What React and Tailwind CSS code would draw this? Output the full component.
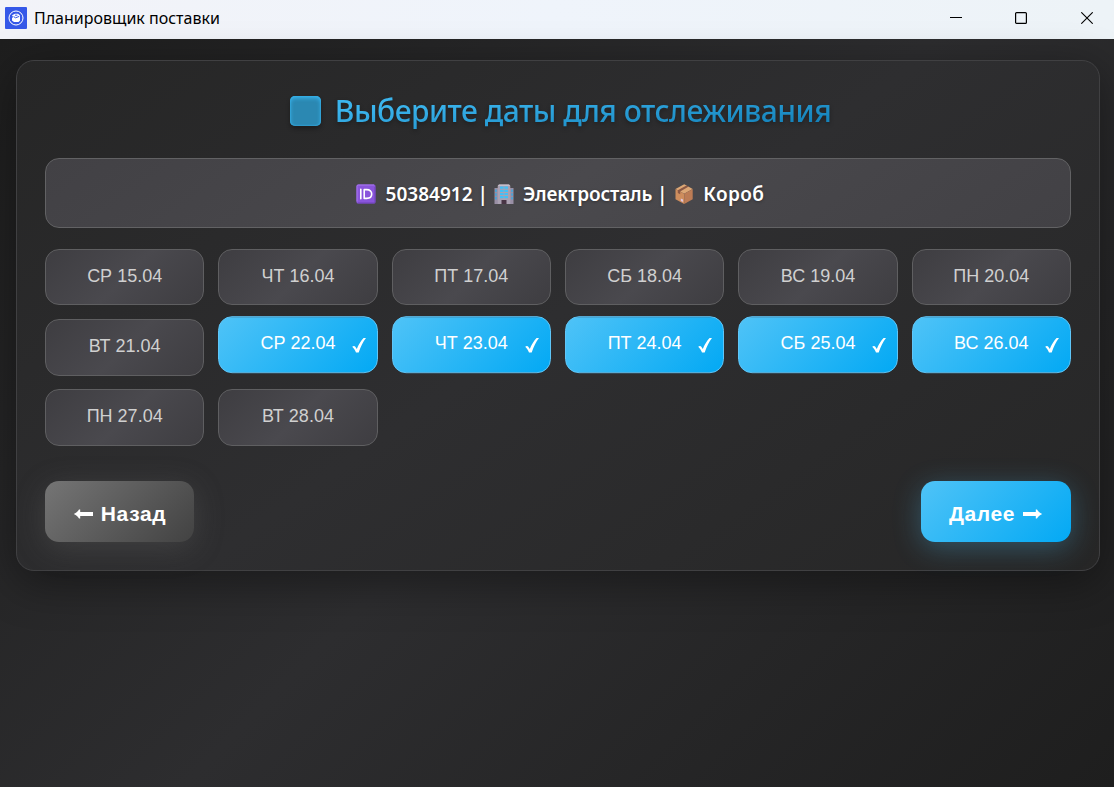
import React from 'react';

const dates = [
  { label: 'СР 15.04' },
  { label: 'ЧТ 16.04' },
  { label: 'ПТ 17.04' },
  { label: 'СБ 18.04' },
  { label: 'ВС 19.04' },
  { label: 'ПН 20.04' },
  { label: 'ВТ 21.04' },
  { label: 'СР 22.04', selected: true },
  { label: 'ЧТ 23.04', selected: true },
  { label: 'ПТ 24.04', selected: true },
  { label: 'СБ 25.04', selected: true },
  { label: 'ВС 26.04', selected: true },
  { label: 'ПН 27.04' },
  { label: 'ВТ 28.04' },
];

const AppIcon = () => (
  <svg className="w-[22px] h-[22px] shrink-0" viewBox="0 0 22 22" fill="none">
    <rect width="22" height="22" rx="1" fill="#3558e8" />
    <circle cx="11" cy="11" r="7" stroke="#fff" strokeWidth="1" />
    <path d="M7 8.2l3-1.5h3l2 1.8v5l-1.5 1.5H9l-2-1.6v-2.6l1.2-.6z" fill="#fff" />
    <path d="M8.6 9.6l2 1.2 3.6-1.4M10 8.2h2.4" stroke="#3558e8" strokeWidth="1" />
  </svg>
);

const CheckIcon = () => (
  <svg className="w-[14px] h-[16px]" viewBox="0 0 14 16" fill="#fff">
    <path d="M0.2 9.6 C1.2 8.6 2.7 8.6 3.3 9.6 L4.8 11.8 C6.6 7.2 8.8 3.5 11.6 0.7 L14 0.7 C11 4.6 8.7 9.4 6.7 15.2 L4 15.2 C3 13 1.9 11.2 0.2 9.6Z" />
  </svg>
);

const ArrowIcon = ({ className }) => (
  <svg className={className} viewBox="0 0 20 10" fill="#fff">
    <path d="M0.5 3.1h12.8V0.4h1.2c1 1.7 2.6 3.3 5.2 4.5-2.6 1.2-4.2 2.8-5.2 4.7h-1.2V6.9H0.5z" />
  </svg>
);

const IdIcon = () => (
  <svg className="w-[20px] h-[20px]" viewBox="0 0 20 20" fill="none">
    <rect x="0.5" y="0.5" width="19" height="19" rx="1.5" fill="#8a55dc" />
    <path d="M1 17.5V2.2C1 1.4 1.5 1 2.2 1H18" stroke="#a878f0" />
    <path d="M19 3v14.8c0 .8-.4 1.2-1.2 1.2H2" stroke="#6e43b8" />
    <path d="M4.8 5.3v9.4M8.2 5.6v8.8h2.5c3.1 0 5-1.7 5-4.4s-1.9-4.4-5-4.4z" stroke="#fff" strokeWidth="1.6" strokeLinecap="round" strokeLinejoin="round" />
  </svg>
);

const BuildingIcon = () => (
  <svg className="w-[20px] h-[20px]" viewBox="0 0 20 20">
    <path d="M0.5 4h4v16h-4zM15.5 4h4v16h-4z" fill="#998fa5" />
    <path d="M5 .5h10l1.3 1.5V20H3.7V2z" fill="#aaa1b2" />
    <path d="M3.7 2L5 .5h10l1.3 1.5z" fill="#c5bdca" />
    <path d="M6 2.5h3.6v2.2H6zM10.4 2.5H14v2.2h-3.6zM6 5.7h3.6v2.2H6zM10.4 5.7H14v2.2h-3.6zM6 8.9h3.6v2.2H6zM10.4 8.9H14v2.2h-3.6zM6 12.1h3.6v2.2H6zM10.4 12.1H14v2.2h-3.6z" fill="#42c0f7" />
    <path d="M1.2 5.5h1.5V8H1.2zM1.2 9.2h1.5v2.5H1.2zM1.2 13h1.5v2.5H1.2zM17.3 5.5h1.5V8h-1.5zM17.3 9.2h1.5v2.5h-1.5zM17.3 13h1.5v2.5h-1.5z" fill="#3ba9df" />
    <path d="M7.5 16h5v4h-5z" fill="#483545" />
  </svg>
);

const BoxIcon = () => (
  <svg className="w-[20px] h-[20px]" viewBox="0 0 20 20">
    <path d="M10.2.3l8.5 4.6-8.5 4.9L1.5 5z" fill="#dda775" />
    <path d="M1.5 5l8.7 4.8V20l-8.7-4.8z" fill="#ce8d5d" />
    <path d="M18.7 4.9v10.3L10.2 20V9.8z" fill="#bd7c55" />
    <path d="M6.2 7.6l8.5-5-2.3-1.2-8.6 4.9v2.6l2.4 1.4z" fill="#8a5844" />
    <path d="M6.8 14.4l2.3 1.2v2.5l-2.3-1.2z" fill="#dfc6df" />
  </svg>
);

const TitleBar = () => (
  <header className="h-[39px] bg-linear-to-r from-[#f2f3f8] via-[#eff4fb] to-[#edf3f7] flex items-center justify-between text-black">
    <div className="flex items-center pl-[5px] pb-[3px] gap-[7px]">
      <AppIcon />
      <span className="text-[16px] leading-[20px] whitespace-nowrap">Планировщик поставки</span>
    </div>
    <div className="flex items-center gap-[53px] pr-[21px] pb-[3px]">
      <svg className="w-[12px] h-[12px]" viewBox="0 0 12 12" stroke="#000">
        <path d="M0 5.5h12" />
      </svg>
      <svg className="w-[12px] h-[12px]" viewBox="0 0 12 12" stroke="#000" fill="none" strokeWidth="1.2">
        <rect x="0.6" y="0.6" width="10.8" height="10.8" rx="1" />
      </svg>
      <svg className="ml-px w-[12px] h-[12px]" viewBox="0 0 12 12" stroke="#000" strokeWidth="1.1">
        <path d="M0.3 0.3l11.4 11.4M11.7 0.3L0.3 11.7" />
      </svg>
    </div>
  </header>
);

const DateButton = ({ label, selected }) => (
  <button
    className={`relative h-[56.4px] rounded-[14px] border font-['Liberation_Sans',sans-serif] text-[18px] pb-[1.2px] tracking-normal ${
      selected
        ? '-translate-y-[2.8px] border-[#5fc6f8] bg-[linear-gradient(135deg,#4fc3f7,#03a9f4)] text-white'
        : 'border-[#5f5f61] bg-[linear-gradient(135deg,#3e3d41,#4a494e_50%,#3e3d41)] text-[#d0d0d0]'
    }`}
  >
    {label}
    {selected && (
      <span className="absolute right-[11px] top-[20px]">
        <CheckIcon />
      </span>
    )}
  </button>
);

export default function App() {
  return (
    <div className="h-[787px] flex flex-col overflow-hidden font-['Noto_Sans',sans-serif]">
      <TitleBar />
      <main className="flex-1 px-4 pt-[21px] pr-[14px] bg-[linear-gradient(135deg,#1e1e1e,#2d2d2f_50%,#1e1e1e)]">
        <section className="h-[511px] rounded-[18px] border border-[#404042] px-7 pt-[27px] bg-[linear-gradient(145deg,#262626,#2e2e30_50%,#262626)] shadow-[0_11px_45px_rgba(0,0,0,0.4)]">
          {/* Heading */}
          <div className="flex items-center justify-center h-[46px] gap-[14px] pl-[5px]">
            <span className="w-[31px] h-[30px] rounded-[5px] bg-[#2b88b2] shadow-[inset_0_2px_4px_#38b5ef,inset_0_0_2px_#38b5ef,0_3px_4px_rgba(0,0,0,0.3)]" />
            <h1 className="text-[30px] leading-[42px] font-medium tracking-[-0.5px] whitespace-nowrap text-transparent bg-clip-text bg-[linear-gradient(175deg,#3bb5ee_25%,#1583bb_85%)] drop-shadow-[0_2px_2px_rgba(0,0,0,0.3)]">
              Выберите даты для отслеживания
            </h1>
          </div>

          {/* Supply info */}
          <div className="mt-[24px] h-[70px] rounded-[14px] border border-[#626264] bg-[linear-gradient(145deg,#424145,#4a494d_50%,#424145)] flex items-center justify-center pt-[2px] pl-[4px] text-white text-[19px] font-semibold whitespace-pre [text-shadow:0_1px_3px_rgba(0,0,0,0.35)]">
            <IdIcon />
            <span className="ml-[10px] mr-[6px]">50384912 |</span>
            <BuildingIcon />
            <span className="ml-[9px] mr-[7px] tracking-[-0.15px]">Электросталь |</span>
            <BoxIcon />
            <span className="ml-[9px] tracking-[0.4px]">Короб</span>
          </div>

          <div className="mt-[21px] grid grid-cols-6 gap-x-[14px] gap-y-[13.8px]">
            {dates.map(date => (
              <DateButton key={date.label} label={date.label} selected={date.selected} />
            ))}
          </div>

          {/* Navigation */}
          <div className="mt-[35.2px] flex justify-between text-white font-bold text-[21px] font-['Liberation_Sans',sans-serif]">
            <button className="w-[149px] h-[61px] rounded-[14px] pt-[5px] flex items-center justify-center gap-[7px] tracking-[0.6px] bg-[linear-gradient(135deg,#757575,#424242)] shadow-[0_6px_30px_rgba(117,117,117,0.28)]">
              <ArrowIcon className="w-[21px] h-[10px] -scale-x-100" />
              Назад
            </button>
            <button className="w-[150px] h-[61px] rounded-[14px] pt-[5px] flex items-center justify-center gap-[7px] tracking-[0.6px] bg-[linear-gradient(135deg,#4fc3f7,#03a9f4)] shadow-[0_6px_28px_rgba(79,195,247,0.3)]">
              Далее
              <ArrowIcon className="w-[21px] h-[10px]" />
            </button>
          </div>
        </section>
      </main>
    </div>
  );
}
